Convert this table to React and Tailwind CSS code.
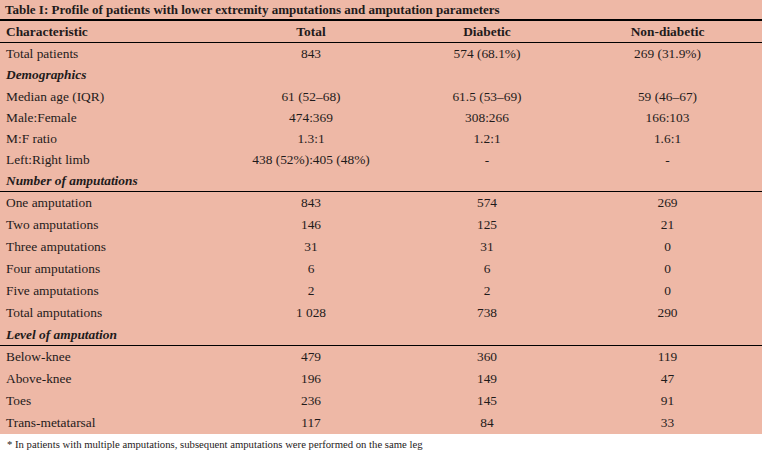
const G1 = [
  ['Total patients', '843', '574 (68.1%)', '269 (31.9%)'],
  ['Demographics'],
  ['Median age (IQR)', '61 (52–68)', '61.5 (53–69)', '59 (46–67)'],
  ['Male:Female', '474:369', '308:266', '166:103'],
  ['M:F ratio', '1.3:1', '1.2:1', '1.6:1'],
  ['Left:Right limb', '438 (52%):405 (48%)', '-', '-'],
  ['Number of amputations'],
]
const G2 = [
  ['One amputation', '843', '574', '269'],
  ['Two amputations', '146', '125', '21'],
  ['Three amputations', '31', '31', '0'],
  ['Four amputations', '6', '6', '0'],
  ['Five amputations', '2', '2', '0'],
  ['Total amputations', '1 028', '738', '290'],
  ['Level of amputation'],
]
const G3 = [
  ['Below-knee', '479', '360', '119'],
  ['Above-knee', '196', '149', '47'],
  ['Toes', '236', '145', '91'],
  ['Trans-metatarsal', '117', '84', '33'],
]

function Row({ cells, h, last }) {
  const section = cells.length === 1
  return (
    <div className={`flex items-center ${h} ${last ? 'border-b border-black' : ''}`}>
      {section ? (
        <div className="pl-[6px] font-bold italic">{cells[0]}</div>
      ) : (
        <>
          <div className="w-[221px] pl-[6px] shrink-0">{cells[0]}</div>
          <div className="w-[180px] text-center shrink-0">{cells[1]}</div>
          <div className="w-[172px] text-center shrink-0">{cells[2]}</div>
          <div className="flex-1 text-center">{cells[3]}</div>
        </>
      )}
    </div>
  )
}

export default function App() {
  return (
    <div className="w-[762px] h-[458px] bg-white text-[#1f1b1b] text-[13.4px] leading-none font-[Liberation_Serif,serif]">
      <div className="bg-[#eeb8a6]">
        <div className="h-[21px] flex items-center pl-[5px] font-bold text-[13px] border-b-2 border-black">
          Table I: Profile of patients with lower extremity amputations and amputation parameters
        </div>
        <div className="h-[22px] flex items-center font-bold border-b border-black">
          <div className="w-[221px] pl-[6px] shrink-0">Characteristic</div>
          <div className="w-[180px] text-center shrink-0">Total</div>
          <div className="w-[172px] text-center shrink-0">Diabetic</div>
          <div className="flex-1 text-center">Non-diabetic</div>
        </div>
        {G1.map((r, i) => <Row key={r[0]} cells={r} h="h-[21.3px]" last={i === G1.length - 1} />)}
        {G2.map((r, i) => <Row key={r[0]} cells={r} h="h-[22px]" last={i === G2.length - 1} />)}
        {G3.map((r) => <Row key={r[0]} cells={r} h="h-[22px]" />)}
      </div>
      <div className="pt-[5px] pl-[7px] text-[10.7px]">
        * In patients with multiple amputations, subsequent amputations were performed on the same leg
      </div>
    </div>
  )
}
